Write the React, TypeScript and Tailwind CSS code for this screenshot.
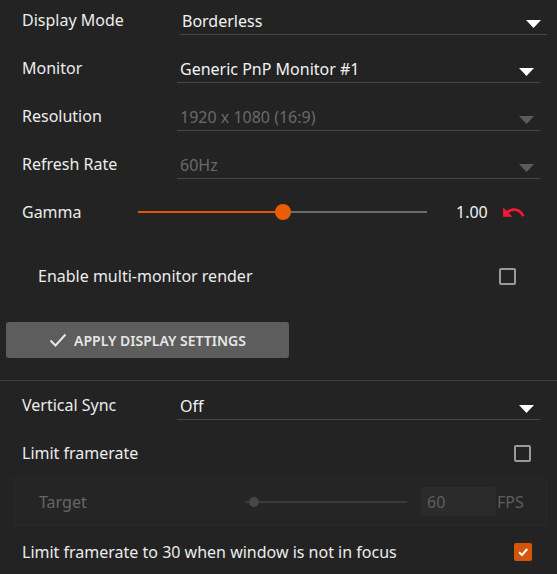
import React from "react";

function Arrow({ disabled }: { disabled?: boolean }) {
  return (
    <svg width="15" height="8" viewBox="0 0 15 8" className="mt-[7px]">
      <polygon points="0,0 15,0 7.5,8" fill={disabled ? "#5c5c5c" : "#ffffff"} />
    </svg>
  );
}

function DropRow({
  label,
  value,
  disabled,
  first,
}: {
  label: string;
  value: string;
  disabled?: boolean;
  first?: boolean;
}) {
  return (
    <div className="flex h-12 items-start pl-[22px] pr-[17px]">
      <div className="w-[155px] h-12 flex items-center text-[16px] text-[#ececec]">{label}</div>
      <div
        className={
          "flex-1 mt-[9px] h-[30px] border-b border-[#474747] flex items-center justify-between pt-[2px] pr-[6px] " +
          (first ? "ml-[3px] mr-[-7px] pl-[2px]" : "pl-[3px]")
        }
      >
        <span className={"text-[16px] " + (disabled ? "text-[#6a6a6a]" : "text-[#f2f2f2]")}>{value}</span>
        <Arrow disabled={disabled} />
      </div>
    </div>
  );
}

function Checkbox({ checked }: { checked?: boolean }) {
  if (checked) {
    return (
      <div className="w-[18px] h-[18px] rounded-[2px] bg-[#d4560a] flex items-center justify-center">
        <svg width="12" height="12" viewBox="0 0 12 12">
          <path d="M2 6.2 L5 9 L10.2 3" stroke="#ffffff" strokeWidth="2" fill="none" />
        </svg>
      </div>
    );
  }
  return <div className="w-[17px] h-[17px] rounded-[2px] border-2 border-[#9a9a9a]" />;
}

export default function App() {
  return (
    <div
      className="w-[557px] h-[574px] overflow-hidden bg-[#232323] select-none"
      style={{ fontFamily: '"Noto Sans", "Open Sans", sans-serif' }}
    >
      <div className="-mt-1">
        <DropRow label="Display Mode" value="Borderless" first />
        <DropRow label="Monitor" value="Generic PnP Monitor #1" />
        <DropRow label="Resolution" value="1920 x 1080 (16:9)" disabled />
        <DropRow label="Refresh Rate" value="60Hz" disabled />

        {/* Gamma */}
        <div className="flex h-12 items-center pl-[22px]">
          <div className="w-[116px] text-[16px] text-[#ececec]">Gamma</div>
          <div className="relative w-[289px] h-4 flex items-center">
            <div className="w-full h-[2px] bg-[#6b6b6b]" />
            <div className="absolute left-0 top-[7px] h-[2px] w-[145px] bg-[#e25a07]" />
            <div className="absolute left-[137px] top-0 w-4 h-4 rounded-full bg-[#e85d06]" />
          </div>
          <div className="ml-[29px] text-[16px] text-[#f2f2f2]">1.00</div>
          <svg width="25" height="25" viewBox="0 0 24 24" className="ml-[13px] mt-[1px]">
            <path
              d="M12.5 8c-2.65 0-5.05.99-6.9 2.6L2 7v9h9l-3.62-3.62c1.39-1.16 3.16-1.88 5.12-1.88 3.54 0 6.55 2.31 7.6 5.5l2.37-.78C21.08 11.03 17.15 8 12.5 8z"
              fill="#f5173b"
            />
          </svg>
        </div>

        {/* Multi monitor */}
        <div className="mt-4 flex h-12 items-center justify-between pl-[38px] pr-[41px]">
          <span className="text-[16px] text-[#ececec]">Enable multi-monitor render</span>
          <Checkbox />
        </div>

        {/* Button */}
        <div className="mt-[22px] ml-[6px] w-[283px] h-9 rounded-[3px] bg-[#5d5d5d] flex items-center justify-center gap-[7px]">
          <svg width="18" height="14" viewBox="0 0 18 14">
            <path d="M1.5 7.5 L6.5 12.5 L16.5 1.5" stroke="#e8e8e8" strokeWidth="2" fill="none" />
          </svg>
          <span className="text-[14px] font-semibold text-[#e6e6e6]">APPLY DISPLAY SETTINGS</span>
        </div>

        {/* Separator */}
        <div className="mt-[22px] h-px bg-[#3d3d3d]" />

        <DropRow label="Vertical Sync" value="Off" />

        {/* Limit framerate */}
        <div className="flex h-12 items-center justify-between pl-[22px] pr-[26px]">
          <span className="text-[16px] text-[#ececec]">Limit framerate</span>
          <Checkbox />
        </div>

        {/* Target panel */}
        <div className="ml-[14px] mr-[10px] h-[49px] bg-[#252525] border border-[#282828] flex items-center pl-[24px]">
          <span className="w-[206px] text-[16px] text-[#666666]">Target</span>
          <div className="relative w-[162px] h-[10px] flex items-center">
            <div className="w-full h-[2px] bg-[#3a3a3a]" />
            <div className="absolute left-[4px] top-0 w-[10px] h-[10px] rounded-full bg-[#474747]" />
          </div>
          <div className="ml-[14px] w-[75px] h-[29px] rounded-[3px] bg-[#2b2b2b] flex items-center pl-[6px] text-[16px] text-[#5e5e5e]">
            60
          </div>
          <span className="ml-[1px] text-[16px] text-[#5e5e5e]">FPS</span>
        </div>

        {/* Last row */}
        <div className="mt-[2px] flex h-12 items-center justify-between pl-[22px] pr-[25px]">
          <span className="text-[16px] text-[#ececec]">Limit framerate to 30 when window is not in focus</span>
          <Checkbox checked />
        </div>
      </div>
    </div>
  );
}
